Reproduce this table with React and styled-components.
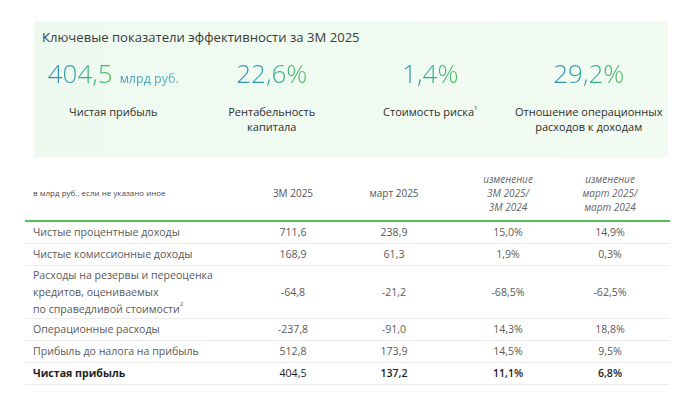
import styled, { createGlobalStyle } from "styled-components";

const Global = createGlobalStyle`
  html, body {
    margin: 0;
    padding: 0;
    background: #ffffff;
  }
  body {
    font-family: "Open Sans", "Noto Sans", sans-serif;
    color: #3a3a3a;
  }
`;

const Page = styled.div`
  width: 700px;
  height: 403px;
  padding-top: 21px;
  box-sizing: border-box;
  overflow: hidden;
`;

const Panel = styled.section`
  margin-left: 34px;
  width: 634px;
  height: 136px;
  box-sizing: border-box;
  background: linear-gradient(90deg, #eefaef 0%, #f1fbf2 100%);
  padding: 7px 0 0 8px;
`;

const Title = styled.h2`
  margin: 0;
  font-size: 13.1px;
  font-weight: 400;
  line-height: 19px;
  color: #3b3b3b;
`;

const Metrics = styled.div`
  display: grid;
  grid-template-columns: repeat(4, 1fr);
  margin-left: -8px;
  margin-top: 8px;
`;

const Metric = styled.div`
  display: flex;
  flex-direction: column;
  align-items: center;
`;

const Value = styled.div`
  display: flex;
  align-items: baseline;
  gap: 7px;
  height: 36px;
`;

const Number = styled.span`
  font-size: 26px;
  font-weight: 300;
  line-height: 36px;
  background: linear-gradient(90deg, #2f86b4 0%, #33a7a0 45%, #45bb55 100%);
  -webkit-background-clip: text;
  background-clip: text;
  color: transparent;
`;

const Unit = styled.span`
  font-size: 12.5px;
  font-weight: 400;
  background: linear-gradient(90deg, #3a97bf 0%, #58b4b4 100%);
  -webkit-background-clip: text;
  background-clip: text;
  color: transparent;
`;

const Label = styled.div`
  margin-top: 13px;
  font-size: 11px;
  line-height: 15px;
  text-align: center;
  color: #2e2e2e;

  sup {
    font-size: 6px;
    line-height: 0;
    vertical-align: 6px;
  }
`;

const Table = styled.div`
  margin-left: 25px;
  width: 645px;
  margin-top: 8px;
`;

const Row = styled.div`
  display: grid;
  grid-template-columns: 218px 100px 102px 126px 78px;
  padding-right: 21px;
  align-items: center;
  height: ${({ $tall }) => ($tall ? "52px" : "21px")};
  border-bottom: 1px solid #ececec;
  font-size: 10.6px;
  line-height: 17px;
  color: ${({ $bold }) => ($bold ? "#1e1e1e" : "#5a5a5a")};
  font-weight: ${({ $bold }) => ($bold ? 700 : 400)};
`;

const HeadRow = styled.div`
  display: grid;
  grid-template-columns: 218px 100px 102px 126px 78px;
  padding-right: 21px;
  align-items: center;
  height: 55px;
  border-bottom: 2px solid #55c05a;
  font-size: 10px;
  line-height: 14px;
  color: #555;
`;

const Note = styled.div`
  font-size: 8px;
  padding-left: 8px;
  color: #4a4a4a;
`;

const HeadCell = styled.div`
  text-align: center;
  font-style: ${({ $italic }) => ($italic ? "italic" : "normal")};
  color: ${({ $italic }) => ($italic ? "#666" : "#555")};
`;

const Name = styled.div`
  padding-left: 8px;

  sup {
    font-size: 6px;
    line-height: 0;
    vertical-align: 7px;
  }
`;

const Cell = styled.div`
  text-align: center;
  font-weight: ${({ $bold }) => ($bold ? 600 : 400)};
`;

const metrics = [
  { value: "404,5", unit: "млрд руб.", label: "Чистая прибыль" },
  { value: "22,6%", label: ["Рентабельность", "капитала"] },
  { value: "1,4%", label: "Стоимость риска", sup: "1" },
  { value: "29,2%", label: ["Отношение операционных", "расходов к доходам"] },
];

const rows = [
  { name: "Чистые процентные доходы", v: ["711,6", "238,9", "15,0%", "14,9%"] },
  { name: "Чистые комиссионные доходы", v: ["168,9", "61,3", "1,9%", "0,3%"] },
  {
    name: ["Расходы на резервы и переоценка", "кредитов, оцениваемых", "по справедливой стоимости"],
    sup: "2",
    tall: true,
    v: ["-64,8", "-21,2", "-68,5%", "-62,5%"],
  },
  { name: "Операционные расходы", v: ["-237,8", "-91,0", "14,3%", "18,8%"] },
  { name: "Прибыль до налога на прибыль", v: ["512,8", "173,9", "14,5%", "9,5%"] },
  { name: "Чистая прибыль", bold: true, v: ["404,5", "137,2", "11,1%", "6,8%"] },
];

function lines(text) {
  if (!Array.isArray(text)) return text;
  return text.map((t, i) => (
    <span key={i}>
      {t}
      {i < text.length - 1 && <br />}
    </span>
  ));
}

export default function App() {
  return (
    <Page>
      <Global />
      <Panel>
        <Title>Ключевые показатели эффективности за 3М 2025</Title>
        <Metrics>
          {metrics.map((m) => (
            <Metric key={m.value}>
              <Value>
                <Number>{m.value}</Number>
                {m.unit && <Unit>{m.unit}</Unit>}
              </Value>
              <Label>
                {lines(m.label)}
                {m.sup && <sup>{m.sup}</sup>}
              </Label>
            </Metric>
          ))}
        </Metrics>
      </Panel>
      <Table>
        <HeadRow>
          <Note>в млрд руб., если не указано иное</Note>
          <HeadCell>3М 2025</HeadCell>
          <HeadCell>март 2025</HeadCell>
          <HeadCell $italic>
            изменение
            <br />
            3М 2025/
            <br />
            3М 2024
          </HeadCell>
          <HeadCell $italic>
            изменение
            <br />
            март 2025/
            <br />
            март 2024
          </HeadCell>
        </HeadRow>
        {rows.map((r, i) => (
          <Row key={i} $tall={r.tall} $bold={r.bold}>
            <Name>
              {lines(r.name)}
              {r.sup && <sup>{r.sup}</sup>}
            </Name>
            {r.v.map((v, j) => (
              <Cell key={j} $bold={r.bold && j > 0}>
                {v}
              </Cell>
            ))}
          </Row>
        ))}
      </Table>
    </Page>
  );
}
